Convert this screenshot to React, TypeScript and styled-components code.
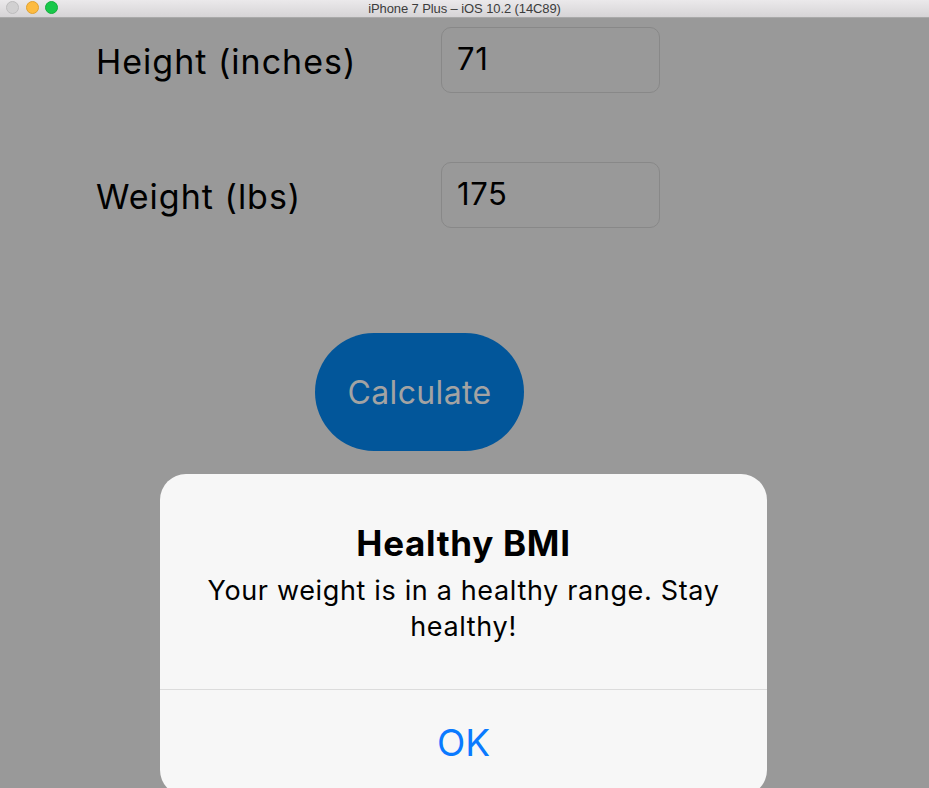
import React from "react";
import styled, { createGlobalStyle } from "styled-components";

const Global = createGlobalStyle`
  html, body { margin: 0; padding: 0; width: 929px; height: 788px; overflow: hidden; background: #999999; }
  body { font-family: "Inter", "Roboto", "Liberation Sans", sans-serif; }
  * { box-sizing: border-box; }
`;

const Window = styled.div`
  width: 929px;
  height: 788px;
  display: flex;
  flex-direction: column;
  overflow: hidden;
`;

const TitleBar = styled.div`
  height: 18px;
  flex: none;
  position: relative;
  display: flex;
  align-items: center;
  justify-content: center;
  background: linear-gradient(#ebe9eb, #d6d4d6);
  border-bottom: 1px solid #a9a9a9;
`;

const Lights = styled.div`
  position: absolute;
  left: 6px;
  top: 1px;
  display: flex;
  gap: 6.5px;
`;

const Light = styled.span<{ $c: string; $b: string }>`
  width: 13px;
  height: 13px;
  border-radius: 50%;
  background: ${(p) => p.$c};
  border: 1px solid ${(p) => p.$b};
`;

const TitleText = styled.span`
  font-family: "Liberation Sans", sans-serif;
  font-size: 13px;
  color: #3c3c3c;
  letter-spacing: -0.1px;
`;

const Screen = styled.div`
  position: relative;
  flex: 1;
  background: #999999;
  overflow: hidden;
`;

const Form = styled.div`
  display: flex;
  flex-direction: column;
  padding: 9px 0 0 96px;
`;

const Row = styled.div`
  display: flex;
  align-items: center;
  height: 66px;
  margin-bottom: 69px;
`;

const Label = styled.div`
  width: 345px;
  font-size: 34px;
  color: #000;
  letter-spacing: 1px;
  padding-top: 3px;
`;

const Field = styled.div`
  width: 219px;
  height: 66px;
  border: 1px solid #888888;
  border-radius: 10px;
  display: flex;
  align-items: center;
  padding: 0 15px 4px;
  font-size: 31px;
  color: #000;
  letter-spacing: 0.6px;
`;

const ButtonRow = styled.div`
  display: flex;
  padding-left: 219px;
  margin-top: 36px;
`;

const CalcButton = styled.div`
  width: 209px;
  height: 118px;
  border-radius: 59px;
  background: #02569a;
  color: #a3a3a3;
  font-size: 32px;
  display: flex;
  align-items: center;
  justify-content: center;
  letter-spacing: 0.35px;
`;

const Alert = styled.div`
  position: absolute;
  left: 160px;
  top: 456px;
  width: 607px;
  height: 322px;
  border-radius: 26px;
  background: #f7f7f7;
  display: flex;
  flex-direction: column;
`;

const AlertBody = styled.div`
  height: 216px;
  display: flex;
  flex-direction: column;
  align-items: center;
  padding: 48px 36px 0;
  text-align: center;
  border-bottom: 1px solid #dcdcdc;
`;

const AlertTitle = styled.div`
  font-size: 35px;
  font-weight: 700;
  color: #000;
  line-height: 42px;
  letter-spacing: 0.7px;
`;

const AlertMessage = styled.div`
  margin-top: 9px;
  font-size: 27px;
  line-height: 36px;
  color: #000;
  letter-spacing: 0.65px;
`;

const AlertAction = styled.div`
  height: 104px;
  display: flex;
  align-items: center;
  justify-content: center;
  font-size: 37px;
  color: #0a7aff;
`;

export default function App() {
  return (
    <>
      <Global />
      <Window>
        <TitleBar>
          <Lights>
            <Light $c="#d1d0d1" $b="#bdbcbd" />
            <Light $c="#fdbb40" $b="#e0a130" />
            <Light $c="#18c84a" $b="#14ad3d" />
          </Lights>
          <TitleText>iPhone 7 Plus – iOS 10.2 (14C89)</TitleText>
        </TitleBar>
        <Screen>
          <Form>
            <Row>
              <Label>Height (inches)</Label>
              <Field>71</Field>
            </Row>
            <Row>
              <Label>Weight (lbs)</Label>
              <Field>175</Field>
            </Row>
            <ButtonRow>
              <CalcButton>Calculate</CalcButton>
            </ButtonRow>
          </Form>
          <Alert>
            <AlertBody>
              <AlertTitle>Healthy BMI</AlertTitle>
              <AlertMessage>Your weight is in a healthy range. Stay healthy!</AlertMessage>
            </AlertBody>
            <AlertAction>OK</AlertAction>
          </Alert>
        </Screen>
      </Window>
    </>
  );
}
